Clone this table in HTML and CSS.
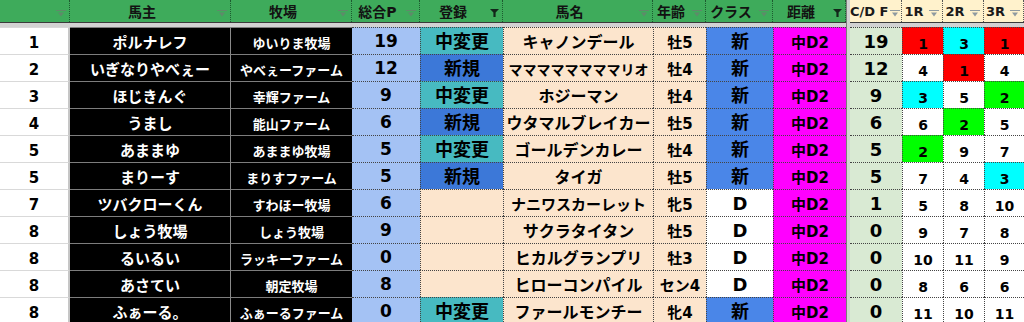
FILE: index.html
```html
<!DOCTYPE html>
<html lang="ja">
<head>
<meta charset="utf-8">
<title>馬主一覧</title>
<link rel="stylesheet" href="styles.css">
</head>
<body>
<div class="sheet">
  <div class="h"><span class="lbl"></span><span class="ic"><svg class="fi" viewBox="0 0 10 7"><rect x="0" y="0" width="10" height="1"/><path d="M2 2.5h6l-3 4z"/></svg></span></div>
  <div class="h"><span class="lbl">馬主</span><span class="ic"><svg class="fi" viewBox="0 0 10 7"><rect x="0" y="0" width="10" height="1"/><path d="M2 2.5h6l-3 4z"/></svg></span></div>
  <div class="h"><span class="lbl">牧場</span><span class="ic"><svg class="fi" viewBox="0 0 10 7"><rect x="0" y="0" width="10" height="1"/><path d="M2 2.5h6l-3 4z"/></svg></span></div>
  <div class="h"><span class="lbl">総合P</span><span class="ic"><svg class="fi" viewBox="0 0 10 7"><rect x="0" y="0" width="10" height="1"/><path d="M2 2.5h6l-3 4z"/></svg></span></div>
  <div class="h"><span class="lbl">登録</span><span class="ic"><svg class="ff" viewBox="0 0 9 8"><path d="M0 0h9L5.6 3.6V8H3.4V3.6z"/></svg></span></div>
  <div class="h"><span class="lbl">馬名</span><span class="ic"><svg class="fi" viewBox="0 0 10 7"><rect x="0" y="0" width="10" height="1"/><path d="M2 2.5h6l-3 4z"/></svg></span></div>
  <div class="h"><span class="lbl">年齢</span><span class="ic"><svg class="fi" viewBox="0 0 10 7"><rect x="0" y="0" width="10" height="1"/><path d="M2 2.5h6l-3 4z"/></svg></span></div>
  <div class="h"><span class="lbl">クラス</span><span class="ic"><svg class="fi" viewBox="0 0 10 7"><rect x="0" y="0" width="10" height="1"/><path d="M2 2.5h6l-3 4z"/></svg></span></div>
  <div class="h"><span class="lbl">距離</span><span class="ic"><svg class="ff" viewBox="0 0 9 8"><path d="M0 0h9L5.6 3.6V8H3.4V3.6z"/></svg></span></div>
  <div class="h cream"><span class="lbl">C/D F</span><span class="ic"><svg class="fi" viewBox="0 0 10 7"><rect x="0" y="0" width="10" height="1"/><path d="M2 2.5h6l-3 4z"/></svg></span></div>
  <div class="h cream"><span class="lbl">1R</span><span class="ic"><svg class="fi" viewBox="0 0 10 7"><rect x="0" y="0" width="10" height="1"/><path d="M2 2.5h6l-3 4z"/></svg></span></div>
  <div class="h cream"><span class="lbl">2R</span><span class="ic"><svg class="fi" viewBox="0 0 10 7"><rect x="0" y="0" width="10" height="1"/><path d="M2 2.5h6l-3 4z"/></svg></span></div>
  <div class="h cream"><span class="lbl">3R</span><span class="ic"><svg class="fi" viewBox="0 0 10 7"><rect x="0" y="0" width="10" height="1"/><path d="M2 2.5h6l-3 4z"/></svg></span></div>

  <div class="band"></div>
  <div class="sep"></div>

  <div class="c a">1</div><div class="c ow">ポルナレフ</div><div class="c fm">ゆいりま牧場</div><div class="c pt">19</div><div class="c rg chg">中変更</div><div class="c hn">キャノンデール</div><div class="c ag">牡5</div><div class="c cl">新</div><div class="c ds">中D2</div><div class="c cd">19</div><div class="c r p1">1</div><div class="c r p3">3</div><div class="c r p1">1</div>

  <div class="c a">2</div><div class="c ow">いぎなりやべぇー</div><div class="c fm">やべぇーファーム</div><div class="c pt">12</div><div class="c rg new">新規</div><div class="c hn s1">ママママママママリオ</div><div class="c ag">牡4</div><div class="c cl">新</div><div class="c ds">中D2</div><div class="c cd">12</div><div class="c r">4</div><div class="c r p1">1</div><div class="c r">4</div>

  <div class="c a">3</div><div class="c ow">ほじきんぐ</div><div class="c fm">幸輝ファーム</div><div class="c pt">9</div><div class="c rg chg">中変更</div><div class="c hn">ホジーマン</div><div class="c ag">牡4</div><div class="c cl">新</div><div class="c ds">中D2</div><div class="c cd">9</div><div class="c r p3">3</div><div class="c r">5</div><div class="c r p2">2</div>

  <div class="c a">4</div><div class="c ow">うまし</div><div class="c fm">能山ファーム</div><div class="c pt">6</div><div class="c rg new">新規</div><div class="c hn">ウタマルブレイカー</div><div class="c ag">牡5</div><div class="c cl">新</div><div class="c ds">中D2</div><div class="c cd">6</div><div class="c r">6</div><div class="c r p2">2</div><div class="c r">5</div>

  <div class="c a">5</div><div class="c ow">あままゆ</div><div class="c fm">あままゆ牧場</div><div class="c pt">5</div><div class="c rg chg">中変更</div><div class="c hn">ゴールデンカレー</div><div class="c ag">牡4</div><div class="c cl">新</div><div class="c ds">中D2</div><div class="c cd">5</div><div class="c r p2">2</div><div class="c r">9</div><div class="c r">7</div>

  <div class="c a">5</div><div class="c ow">まりーす</div><div class="c fm">まりすファーム</div><div class="c pt">5</div><div class="c rg new">新規</div><div class="c hn">タイガ</div><div class="c ag">牡5</div><div class="c cl">新</div><div class="c ds">中D2</div><div class="c cd">5</div><div class="c r">7</div><div class="c r">4</div><div class="c r p3">3</div>

  <div class="c a">7</div><div class="c ow">ツバクローくん</div><div class="c fm">すわほー牧場</div><div class="c pt">6</div><div class="c rg"></div><div class="c hn s2">ナニワスカーレット</div><div class="c ag">牝5</div><div class="c cl d">D</div><div class="c ds">中D2</div><div class="c cd">1</div><div class="c r">5</div><div class="c r">8</div><div class="c r">10</div>

  <div class="c a">8</div><div class="c ow">しょう牧場</div><div class="c fm">しょう牧場</div><div class="c pt">9</div><div class="c rg"></div><div class="c hn">サクラタイタン</div><div class="c ag">牡5</div><div class="c cl d">D</div><div class="c ds">中D2</div><div class="c cd">0</div><div class="c r">9</div><div class="c r">7</div><div class="c r">8</div>

  <div class="c a">8</div><div class="c ow">るいるい</div><div class="c fm">ラッキーファーム</div><div class="c pt">0</div><div class="c rg"></div><div class="c hn">ヒカルグランプリ</div><div class="c ag">牡3</div><div class="c cl d">D</div><div class="c ds">中D2</div><div class="c cd">0</div><div class="c r">10</div><div class="c r">11</div><div class="c r">9</div>

  <div class="c a">8</div><div class="c ow">あさてい</div><div class="c fm">朝定牧場</div><div class="c pt">8</div><div class="c rg"></div><div class="c hn">ヒローコンパイル</div><div class="c ag">セン4</div><div class="c cl d">D</div><div class="c ds">中D2</div><div class="c cd">0</div><div class="c r">8</div><div class="c r">6</div><div class="c r">6</div>

  <div class="c a">8</div><div class="c ow">ふぁーる。</div><div class="c fm">ふぁーるファーム</div><div class="c pt">0</div><div class="c rg chg">中変更</div><div class="c hn">ファールモンチー</div><div class="c ag">牝4</div><div class="c cl">新</div><div class="c ds">中D2</div><div class="c cd">0</div><div class="c r">11</div><div class="c r">10</div><div class="c r">11</div>
</div>
</body>
</html>
```

FILE: styles.css
```css
html, body {
  margin: 0;
  padding: 0;
  background: #ffffff;
}

body {
  width: 1024px;
  height: 322px;
  overflow: hidden;
}

.sheet {
  display: grid;
  grid-template-columns: 70px 161px 121px 68px 83px 150px 53px 67px 73px 4px 52px 41px 41px 40px;
  grid-template-rows: 22px 5px repeat(11, 27px);
  font-family: "DejaVu Sans", "Noto Sans CJK JP", sans-serif;
  font-weight: 700;
  color: #000;
}

/* header */
.h {
  display: flex;
  align-items: center;
  box-sizing: border-box;
  background: #3eab5b;
  border-right: 1px dotted #1d5a30;
  color: #121212;
  font-size: 14px;
  line-height: 1;
  white-space: nowrap;
}

.h.cream {
  background: #fff2cc;
  border-right: 1px dotted #555;
  font-size: 13px;
  color: #1a1a1a;
}

.h .lbl {
  flex: 1;
  text-align: center;
  padding-top: 1px;
}

.h .ic {
  width: 16px;
  align-self: flex-end;
  display: flex;
  justify-content: center;
  padding-bottom: 5px;
}

.fi {
  width: 10px;
  height: 7px;
  fill: #5f8a6a;
}

.h.cream .fi {
  fill: #8f9aa0;
}

.ff {
  width: 9px;
  height: 8px;
  fill: #13261a;
}

/* frozen pane lines */
.band {
  grid-column: 1 / -1;
  grid-row: 2;
  background: #d2d2d2;
  border-top: 1px solid #3a3a3a;
}

.sep {
  grid-column: 10;
  grid-row: 1 / -1;
  background: #d2d2d2;
  border-left: 1px solid #7a7a7a;
}

/* body cells */
.c {
  display: flex;
  align-items: center;
  justify-content: center;
  box-sizing: border-box;
  line-height: 1;
  white-space: nowrap;
  overflow: hidden;
}

.a {
  border-top: 1px solid #d9d9d9;
  border-right: 2px solid #c6c6c6;
  font-size: 15px;
  padding-top: 5px;
}

.ow {
  background: #000;
  color: #fff;
  border-top: 1px solid #7d7d7d;
  border-right: 1px solid #8a8a8a;
  font-size: 15px;
  padding-top: 4px;
}

.fm {
  background: #000;
  color: #fff;
  border-top: 1px solid #7d7d7d;
  font-size: 13px;
  padding-top: 4px;
}

.pt {
  background: #a4c2f4;
  border-top: 1px dotted #444;
  font-size: 17px;
  padding-top: 1px;
}

.rg {
  background: #fce5cd;
  border-top: 1px dotted #444;
  border-left: 1px dotted #444;
  font-size: 18px;
  padding-top: 2px;
}

.rg.chg {
  background: #47bac1;
}

.rg.new {
  background: #3c78d8;
}

.hn {
  background: #fce5cd;
  border-top: 1px dotted #444;
  border-left: 1px dotted #444;
  font-size: 16px;
  padding-top: 4px;
}

.hn.s1 {
  font-size: 14px;
}

.hn.s2 {
  font-size: 15px;
}

.ag {
  background: #fce5cd;
  border-top: 1px dotted #444;
  border-left: 1px dotted #444;
  font-size: 15px;
  padding-top: 4px;
}

.cl {
  background: #4a86e8;
  border-top: 1px dotted #444;
  border-left: 1px dotted #444;
  font-size: 18px;
  padding-top: 2px;
}

.cl.d {
  background: #ffffff;
}

.ds {
  background: #ff00ff;
  border-top: 1px dotted #444;
  border-left: 1px dotted #444;
  font-size: 15px;
  padding-top: 4px;
}

.cd {
  background: #d9ead3;
  border-top: 1px dotted #444;
  font-size: 18px;
  padding-top: 1px;
}

.r {
  background: #ffffff;
  border-top: 1px dotted #444;
  border-left: 1px dotted #444;
  font-size: 14px;
  padding-top: 5px;
}

.r.p1 {
  background: #ff0000;
}

.r.p2 {
  background: #00ff00;
}

.r.p3 {
  background: #00ffff;
}
```
